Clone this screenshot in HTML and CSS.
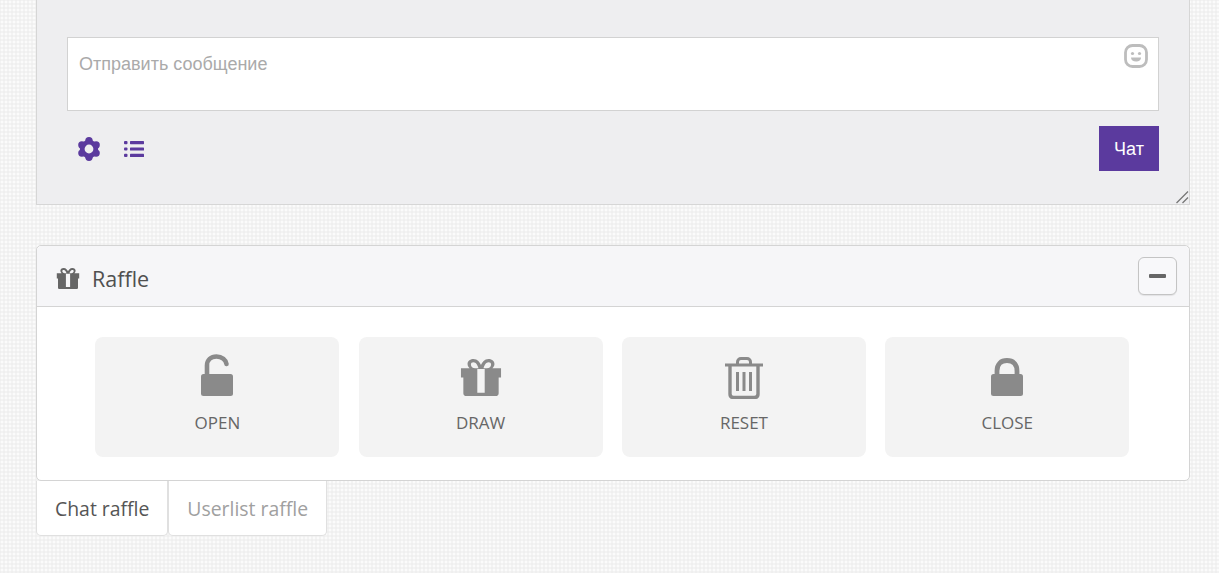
FILE: index.html
```html
<!DOCTYPE html>
<html lang="ru">
<head>
  <meta charset="UTF-8" />
  <meta name="viewport" content="width=device-width, initial-scale=1.0"/>
  <title>Raffle</title>
  <link rel="stylesheet" href="styles.css">
</head>
<body>

<!-- Чат -->
<section class="chat-panel">
  <div class="chat-input">
    <span class="placeholder">Отправить сообщение</span>
    <svg class="emote-icon" viewBox="0 0 24 24" width="24" height="24">
      <rect x="1.500" y="1.500" width="21" height="21" rx="7" fill="none" stroke="#bdbdbd" stroke-width="2.800"/>
      <circle cx="8.500" cy="9.500" r="1.600" fill="#bdbdbd"/>
      <circle cx="15.500" cy="9.500" r="1.600" fill="#bdbdbd"/>
      <path d="M7 13.500h10c0 2.800-2.200 4-5 4s-5-1.200-5-4z" fill="#bdbdbd"/>
    </svg>
  </div>
  <div class="chat-actions">
    <div class="chat-tools">
      <svg class="gear-icon" viewBox="0 0 26 26" width="26" height="26">
        <g fill="#5b3a9e">
          <circle cx="13" cy="13" r="9.200"/>
          <circle cx="13" cy="4.800" r="3.700"/>
          <circle cx="13" cy="21.200" r="3.700"/>
          <circle cx="5.900" cy="8.900" r="3.700"/>
          <circle cx="20.100" cy="8.900" r="3.700"/>
          <circle cx="5.900" cy="17.100" r="3.700"/>
          <circle cx="20.100" cy="17.100" r="3.700"/>
        </g>
        <circle cx="13" cy="13" r="4.400" fill="#eeeef0"/>
      </svg>
      <svg class="list-icon" viewBox="0 0 20 18" width="20" height="18">
        <g fill="#5b3a9e">
          <rect x="0" y="1" width="3.500" height="3.200" rx="1"/>
          <rect x="0" y="7.400" width="3.500" height="3.200" rx="1"/>
          <rect x="0" y="13.800" width="3.500" height="3.200" rx="1"/>
          <rect x="6" y="1" width="14" height="3.200" rx=".6"/>
          <rect x="6" y="7.400" width="14" height="3.200" rx=".6"/>
          <rect x="6" y="13.800" width="14" height="3.200" rx=".6"/>
        </g>
      </svg>
    </div>
    <button class="send-btn">Чат</button>
  </div>
  <svg class="resize-grip" viewBox="0 0 14 14" width="14" height="14">
    <path d="M1.500 13 13 1.500M7.500 13 13 7.500" stroke="#777" stroke-width="1.300" fill="none"/>
  </svg>
</section>

<!-- Розыгрыш -->
<section class="raffle-card">
  <header class="raffle-header">
    <div class="raffle-title">
      <svg class="title-icon" viewBox="0 0 24 22" width="24" height="21">
        <use href="#gift"/>
      </svg>
      <span>Raffle</span>
    </div>
    <button class="collapse-btn"><span class="minus"></span></button>
  </header>
  <div class="raffle-body">
    <button class="raffle-action">
      <svg viewBox="0 0 32 42" width="32" height="42">
        <path d="M6 22V11.500C6 6 10 2.500 15.500 2.500S25 6 25.500 10" fill="none" stroke="#8a8a8a" stroke-width="4.600" stroke-linecap="round"/>
        <rect x="0" y="20" width="32" height="22" rx="2.500" fill="#8a8a8a"/>
      </svg>
      <span>OPEN</span>
    </button>
    <button class="raffle-action">
      <svg class="gift-big" viewBox="0 0 24 22" width="42" height="37">
        <use href="#gift"/>
      </svg>
      <span>DRAW</span>
    </button>
    <button class="raffle-action">
      <svg class="trash-icon" viewBox="0 0 38 42" width="38" height="42">
        <g fill="none" stroke="#8a8a8a">
          <path d="M0 8h38" stroke-width="3"/>
          <path d="M12.500 7V5c0-2 1.500-3.500 3.500-3.500h6c2 0 3.500 1.500 3.500 3.500v2" stroke-width="3"/>
          <path d="M5 8v29c0 2 1 3.500 3.500 3.500h21c2.500 0 3.500-1.500 3.500-3.500V8" stroke-width="3.400"/>
          <path d="M12.500 15v19M19 15v19M25.500 15v19" stroke-width="3"/>
        </g>
      </svg>
      <span>RESET</span>
    </button>
    <button class="raffle-action">
      <svg viewBox="0 0 32 42" width="32" height="42">
        <path d="M6 22v-5c0-7 4-10.500 10-10.500s10 3.500 10 10.500v5" fill="none" stroke="#8a8a8a" stroke-width="4.800"/>
        <rect x="0" y="20" width="32" height="22" rx="2.500" fill="#8a8a8a"/>
      </svg>
      <span>CLOSE</span>
    </button>
  </div>
</section>

<nav class="raffle-tabs">
  <a class="tab active">Chat raffle</a>
  <a class="tab">Userlist raffle</a>
</nav>

<svg class="sprite" width="0" height="0">
  <symbol id="gift" viewBox="0 0 24 22">
    <path fill-rule="evenodd" d="M7.500 0C10 0 11.300 2 12 3.500 12.700 2 14 0 16.500 0 18.700 0 20 1.400 20 3c0 1-.5 1.800-1.200 2.500H24v5.500h-1.500v9.300c0 1-.7 1.700-1.700 1.700H3.200c-1 0-1.700-.7-1.700-1.700V11H0V5.500h5.200C4.500 4.800 4 4 4 3c0-1.600 1.300-3 3.500-3zm0 2C6.600 2 6 2.500 6 3.200 6 4.300 7 5.500 8.500 5.500h2C10 3.800 9 2 7.500 2zm9 0C15 2 14 3.800 13.500 5.500h2C17 5.500 18 4.300 18 3.200 18 2.500 17.400 2 16.500 2zM9.800 6v14h4.400V6z"/>
  </symbol>
</svg>

</body>
</html>
```

FILE: styles.css
```css
html, body {
  margin: 0;
  padding: 0;
  height: 100%;
  overflow: hidden;
}

body {
  padding: 0 29px 0 36px;
  font-family: "Open Sans", sans-serif;
  color: #555;
  background-color: #f3f3f3;
  background-image:
    radial-gradient(rgba(255,255,255,0.7) 1px, transparent 1px),
    radial-gradient(rgba(0,0,0,0.015) 1px, transparent 1px);
  background-size: 4px 4px;
  background-position: 0 0, 2px 2px;
}

.sprite {
  position: absolute;
}

/* Чат */
.chat-panel {
  position: relative;
  height: 167px;
  padding: 37px 30px 0 30px;
  background: #eeeef0;
  border: 1px solid #d6d6d6;
  border-top: none;
}

.chat-input {
  position: relative;
  box-sizing: border-box;
  height: 74px;
  padding: 15px 11px;
  background: #fff;
  border: 1px solid #d2d2d2;
  font-family: "Liberation Sans", Arial, sans-serif;
  font-size: 18px;
  line-height: 22px;
  color: #aaa;
}

.emote-icon {
  position: absolute;
  top: 6px;
  right: 10px;
}

.chat-actions {
  display: flex;
  justify-content: space-between;
  align-items: center;
  margin-top: 15px;
}

.chat-tools {
  display: flex;
  align-items: center;
  gap: 22px;
  padding-left: 9px;
}

.send-btn {
  width: 60px;
  height: 45px;
  padding-top: 3px;
  border: none;
  background: #5b3a9e;
  color: #fff;
  font-family: "Liberation Sans", Arial, sans-serif;
  font-size: 18px;
  cursor: pointer;
}

.resize-grip {
  position: absolute;
  right: 0;
  bottom: 0;
}

/* Розыгрыш */
.raffle-card {
  margin-top: 40px;
  background: #fff;
  border: 1px solid #d4d4d4;
  border-radius: 5px;
}

.raffle-header {
  display: flex;
  justify-content: space-between;
  align-items: center;
  box-sizing: border-box;
  height: 61px;
  padding: 0 12px 0 19px;
  background: #f6f6f8;
  border-bottom: 1px solid #d4d4d4;
  border-radius: 5px 5px 0 0;
}

.raffle-title {
  display: flex;
  align-items: center;
  gap: 12px;
  padding-top: 4px;
  font-size: 21.5px;
  color: #505050;
}

.title-icon {
  fill: #666;
}

.collapse-btn {
  display: flex;
  align-items: center;
  justify-content: center;
  width: 39px;
  height: 38px;
  padding: 0;
  background: #f8f8fa;
  border: 1px solid #c4c4c4;
  border-radius: 6px;
  box-shadow: 0 1px 1px rgba(0,0,0,0.08);
}

.minus {
  width: 17px;
  height: 4px;
  background: #666;
  border-radius: 1px;
}

.raffle-body {
  display: flex;
  justify-content: center;
  gap: 19.3px;
  padding: 30px 1.4px 23px 0;
}

.raffle-action {
  display: flex;
  flex-direction: column;
  align-items: center;
  justify-content: flex-end;
  gap: 15px;
  box-sizing: border-box;
  width: 244px;
  height: 120px;
  padding: 0 0 23px;
  background: #f3f3f3;
  border: none;
  border-radius: 8px;
  font-family: "Open Sans", sans-serif;
  font-size: 17px;
  line-height: 23px;
  color: #666;
  cursor: pointer;
}

.gift-big {
  fill: #8a8a8a;
}

.trash-icon {
  margin-bottom: -3px;
}

/* Вкладки */
.raffle-tabs {
  display: flex;
}

.tab {
  display: block;
  box-sizing: border-box;
  height: 55px;
  padding: 0 18px;
  background: #fff;
  border: 1px solid #e0e0e0;
  border-top: none;
  border-radius: 0 0 5px 5px;
  font-size: 19.4px;
  line-height: 56px;
  color: #a0a0a0;
}

.tab.active {
  color: #555;
}
```
